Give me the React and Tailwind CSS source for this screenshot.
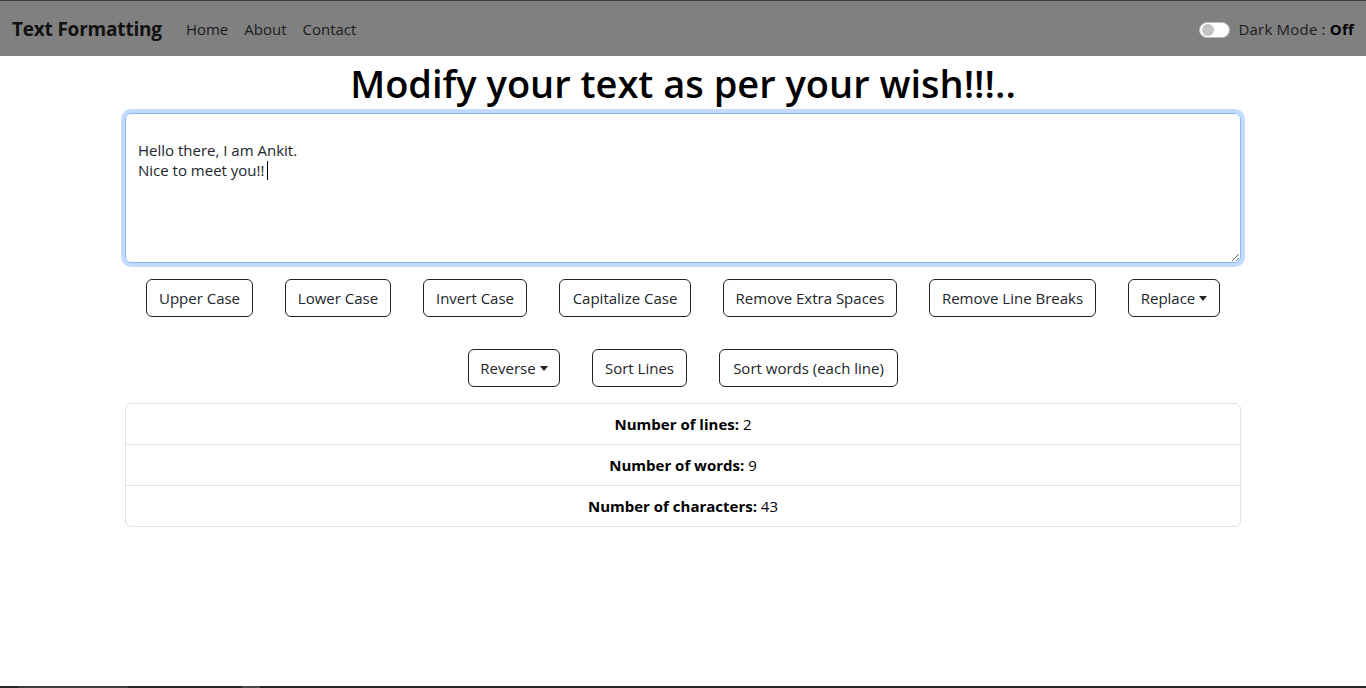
import {useState} from "react";

const rowOne = [
    {label: 'Upper Case', w: 'w-[107px]'},
    {label: 'Lower Case', w: 'w-[106px]'},
    {label: 'Invert Case', w: 'w-[104px]'},
    {label: 'Capitalize Case', w: 'w-[132px]'},
    {label: 'Remove Extra Spaces', w: 'w-[174px]'},
    {label: 'Remove Line Breaks', w: 'w-[167px]'},
    {label: 'Replace', w: 'w-[92px]', caret: true},
];

const rowTwo = [
    {label: 'Reverse', w: 'w-[92px]', caret: true},
    {label: 'Sort Lines', w: 'w-[95px]'},
    {label: 'Sort words (each line)', w: 'w-[179px]'},
];

function Btn({label, w, caret}) {
    return (
        <button
            className={`${w} h-[38px] flex items-center justify-center rounded-[6px] border border-[#212529] text-[15px] text-[#212529] bg-white`}
        >
            {label}
            {caret && (
                <span className="ml-[4px] mt-[1px] inline-block w-0 h-0 border-t-[5px] border-t-[#212529] border-x-[4.5px] border-x-transparent"/>
            )}
        </button>
    );
}

export default function App() {
    const [text, setText] = useState("\nHello there, I am Ankit.\nNice to meet you!!");

    const lines = 2;
    const words = 9;
    const chars = 43;

    return (
        <div className="min-h-[688px] flex flex-col bg-white text-[#212529]"
             style={{fontFamily: '"Open Sans", "Noto Sans", sans-serif'}}>
            <nav className="h-14 border-t border-[#3a3a3a] bg-[#808080] flex items-center px-3 pt-[2px]">
                <span className="text-[19px] font-bold text-[#111] mr-4 tracking-[-0.2px]">Text Formatting</span>
                <div className="flex text-[15px] text-[#1c1c1c]">
                    <a className="px-2">Home</a>
                    <a className="px-2">About</a>
                    <a className="px-2">Contact</a>
                </div>
                <div className="ml-auto flex items-center text-[15px] text-[#1c1c1c] tracking-[0.2px]">
                    <span className="w-[31px] h-[16px] rounded-full bg-white border border-[#bdbdbd] flex items-center px-[2px] mr-[8px]">
                        <span className="w-[12px] h-[12px] rounded-full bg-[#c4c4c4]"/>
                    </span>
                    <span>Dark Mode : <b className="text-black">Off</b></span>
                </div>
            </nav>

            <main className="w-[1140px] mx-auto px-3 flex-1">
                <h1 className="mt-px pt-1 text-[38px] leading-[44px] font-semibold text-center text-black mb-2">
                    Modify your text as per your wish!!!..
                </h1>
                <div className="relative">
                    <textarea
                        value={text}
                        onChange={(e) => setText(e.target.value)}
                        className="block w-full h-[150px] rounded-[6px] border border-[#86b7fe] shadow-[0_0_0_4px_rgba(13,110,253,0.25)] px-3 py-[6px] text-[15px] leading-5 text-[#212529] outline-none"
                    />
                    {/* text cursor */}
                    <span className="absolute left-[142px] top-[48px] w-px h-[19px] bg-black"/>
                </div>

                <div className="flex flex-col items-center gap-8 mt-4 mb-4">
                    <div className="flex gap-8 justify-center">
                        {rowOne.map((b) => <Btn key={b.label} {...b}/>)}
                    </div>
                    <div className="flex gap-8 justify-center">
                        {rowTwo.map((b) => <Btn key={b.label} {...b}/>)}
                    </div>
                </div>

                <ul className="border border-[#dee2e6] rounded-[6px] divide-y divide-[#dee2e6] text-[15px] text-center text-black">
                    <li className="py-2 leading-6"><b>Number of lines:</b> {lines}</li>
                    <li className="py-2 leading-6"><b>Number of words:</b> {words}</li>
                    <li className="py-2 leading-6"><b>Number of characters:</b> {chars}</li>
                </ul>
            </main>

            <div className="h-[2px] bg-[#262626] flex">
                <span className="ml-[18px] w-[110px] bg-[#3c3c3c]"/>
                <span className="ml-[114px] w-[18px] bg-[#4a4a4a]"/>
            </div>
        </div>
    );
}
